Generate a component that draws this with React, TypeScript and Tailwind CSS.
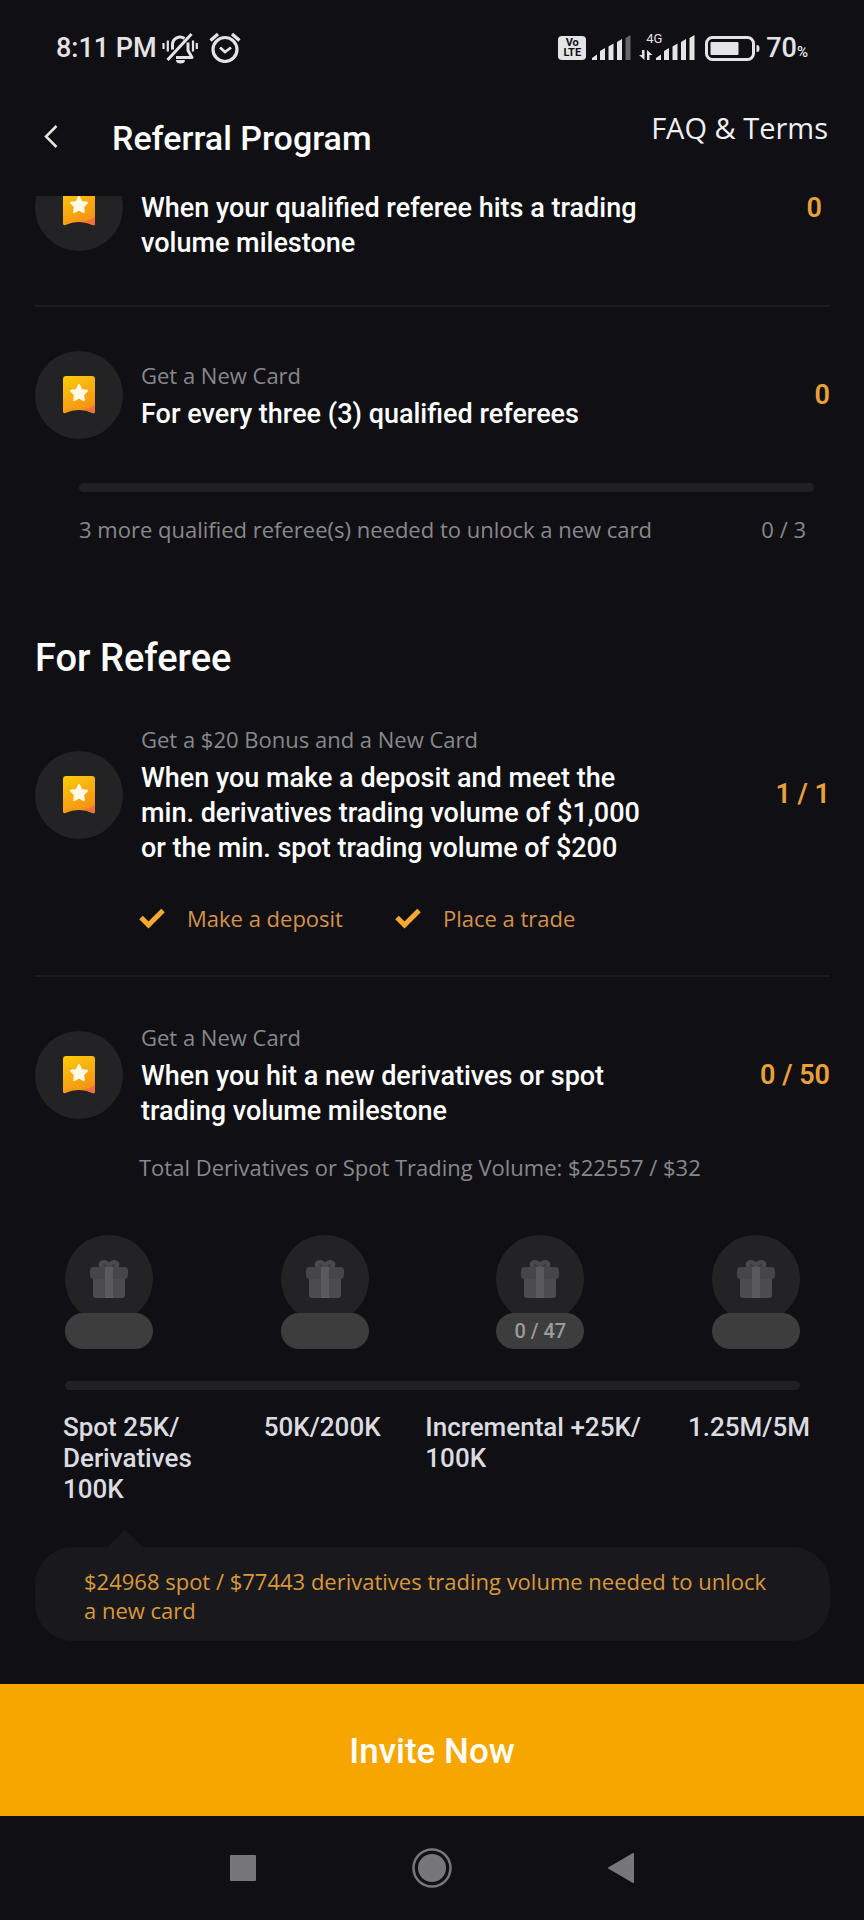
import { useId } from 'react';

const MILESTONES = [
	{ badge: '', label: 'Spot 25K/ Derivatives 100K', width: 'w-[156px]' },
	{ badge: '', label: '50K/200K', width: '' },
	{ badge: '0 / 47', label: 'Incremental +25K/ 100K', width: 'w-[218px]' },
	{ badge: '', label: '1.25M/5M', width: '' },
];

function MutedBellIcon() {
	return (
		<svg width="36" height="32" viewBox="0 0 36 32" fill="none" stroke="#e4e4e6" strokeWidth="3">
			<path d="M10.500 17.500V12.500a7.500 7.500 0 0 1 12-6" />
			<path d="M26 10.500v8l4 7H14" strokeLinejoin="round" />
			<path d="M5.500 28 29.500 2" />
			<path d="M14 28h9a4.500 3.500 0 0 1-9 0Z" fill="#e4e4e6" stroke="none" />
			<path d="M1.500 11v6M5.800 8.500v11M31 8.500v11M34.800 11v6" strokeWidth="2.200" />
		</svg>
	);
}

function AlarmIcon() {
	return (
		<svg width="32" height="32" viewBox="0 0 32 32" fill="none" stroke="#e4e4e6" strokeWidth="3.200">
			<circle cx="16" cy="17.500" r="12" />
			<path d="m11 15.500 5 4.500 6-4.500" strokeWidth="2.800" />
			<path d="M1.500 8.500 9 2M30.500 8.500 23 2" strokeWidth="3.400" />
		</svg>
	);
}

function SignalIcon({ dimLast = false }: { dimLast?: boolean }) {
	return (
		<svg width="39" height="26" viewBox="0 0 39 26" fill="#e4e4e6">
			<path d="M0 25v-2l5-3.500V25ZM8 25V16l5-3v12ZM16.500 25V11.500l5-3V25ZM25 25V7l5-3v21Z" />
			<path d="M33.500 25V3l5-3v25Z" fill={dimLast ? '#66666a' : '#e4e4e6'} />
		</svg>
	);
}

function BatteryIcon() {
	return (
		<svg width="55" height="25" viewBox="0 0 55 25">
			<rect x="1.500" y="1.500" width="47" height="22" rx="6" fill="none" stroke="#e4e4e6" strokeWidth="3" />
			<rect x="5.500" y="6" width="28" height="13" rx="1" fill="#e4e4e6" />
			<path d="M51.500 9c2.500 0 3 1 3 3.500s-.5 3.500-3 3.500Z" fill="#e4e4e6" />
		</svg>
	);
}

function StatusBar() {
	return (
		<div className="flex h-24 items-center justify-between px-14 font-[Roboto,sans-serif] text-[27px] font-medium leading-8 text-[#e4e4e6]">
			<div className="flex items-center">
				<span className="w-[106px]">8:11 PM</span>
				<MutedBellIcon />
				<span className="w-[11px]" />
				<AlarmIcon />
			</div>
			<div className="flex items-center">
				<div className="flex h-6 w-7 flex-col items-center justify-center rounded bg-[#e4e4e6] text-[11px] font-bold leading-[10px] text-[#101014]">
					<span>Vo</span>
					<span>LTE</span>
				</div>
				<span className="w-[6px]" />
				<SignalIcon dimLast />
				<div className="relative ml-[25px]">
					<SignalIcon />
					<span className="absolute -left-[10px] -top-[4px] text-[13px] font-normal leading-4">4G</span>
					<svg className="absolute -left-[17px] top-[15px]" width="14" height="10" viewBox="0 0 14 10" fill="#e4e4e6">
						<path d="M3 0h2.500v10L0 5h3ZM8 0l5.500 5h-3v5H8Z" />
					</svg>
				</div>
				<span className="w-[10px]" />
				<BatteryIcon />
				<span className="ml-[6px]">70</span>
				<span className="self-end text-[15px] leading-6">%</span>
			</div>
		</div>
	);
}

function CardIcon() {
	const id = useId();

	return (
		<div className="flex h-[88px] w-[88px] shrink-0 items-center justify-center rounded-full bg-[#232325]">
			<svg width="32" height="38" viewBox="0 0 32 38">
				<defs>
					<linearGradient id={id} x1="0.300" y1="0" x2="0.700" y2="1">
						<stop offset="0" stopColor="#fcc60c" />
						<stop offset="1" stopColor="#f58e14" />
					</linearGradient>
				</defs>
				<path d="M3 0h26a3 3 0 0 1 3 3v32.500c0 1.500-1 2-2.500 1.500-9-4-18-4-27 0C1 37.500 0 37 0 35.500V3a3 3 0 0 1 3-3Z" fill={`url(#${id})`} />
				<path d="M19 34c5-1 10-3 13-5v6.500c0 1.500-1 2-2.500 1.500-3.500-1.700-7-2.700-10.500-3Z" fill="#f4703a" />
				<path d="m16 9 2.400 5 5.600.8-4 3.900.9 5.500-4.900-2.600-4.900 2.600.9-5.500-4-3.900 5.600-.8Z" fill="#fffbe6" stroke="#fffbe6" strokeWidth="2" strokeLinejoin="round" />
			</svg>
		</div>
	);
}

function GiftIcon() {
	return (
		<svg width="38" height="38" viewBox="0 0 38 38">
			<path d="M18.500 9C9 9 9 2 14 2c3 0 4 2 5 5 1-3 2-5 5-5 5 0 5 7-4.500 7" fill="#3a3a3d" stroke="#4a4a4d" strokeWidth="4" />
			<path d="M3 16h32v19a3 3 0 0 1-3 3H6a3 3 0 0 1-3-3Z" fill="#4c4c4f" />
			<rect y="7" width="38" height="12" rx="4" fill="#464649" />
			<rect x="15" y="7" width="8" height="31" fill="#5a5a5d" />
		</svg>
	);
}

function CheckIcon() {
	return (
		<svg width="26" height="21" viewBox="0 0 26 21" fill="none" stroke="#f7a92f" strokeWidth="5">
			<path d="m2 9.500 7.500 7.500L24 2.500" />
		</svg>
	);
}

function RewardRow({ subtitle, title, value }: { subtitle: string; title: string; value: string }) {
	return (
		<div className="flex items-center">
			<CardIcon />
			<div className="ml-[18px] w-[510px]">
				<p className="mb-[6px] text-[22px] leading-[32px] text-[#88888c]">{subtitle}</p>
				<h3 className="font-[Roboto,sans-serif] text-[27px] font-medium leading-[35px] text-white">{title}</h3>
			</div>
			<span className="ml-auto whitespace-nowrap font-[Roboto,sans-serif] text-[27px] font-semibold leading-[35px] text-[#e9a03b]">
				{value}
			</span>
		</div>
	);
}

export default function App() {
	return (
		<div className="flex min-h-screen flex-col bg-[#101014] font-['Open_Sans',sans-serif]">
			<StatusBar />

			<header className="flex h-[95px] items-start pl-[44px] pr-9">
				<button type="button" aria-label="Back" className="mt-[29px]">
					<svg width="14" height="23" viewBox="0 0 14 23" fill="none" stroke="#e4e4e6" strokeWidth="2.500">
						<path d="M12.500 1 2 11.500 12.500 22" />
					</svg>
				</button>
				<h1 className="ml-[54px] mt-5 font-[Roboto,sans-serif] text-[34px] font-medium leading-[44px] text-white">
					Referral Program
				</h1>
				<a href="#faq" className="ml-auto mt-[14px] text-[29px] leading-[36px] text-[#f0f0f2]">
					FAQ &amp; Terms
				</a>
			</header>

			<main className="flex-1 pl-[35px] pr-[34px]">
				<div className="flex items-start">
					<div className="mt-[5px] flex h-[55px] items-end overflow-hidden">
						<CardIcon />
					</div>
					<h3 className="ml-[18px] w-[510px] font-[Roboto,sans-serif] text-[27px] font-medium leading-[35px] text-white">
						When your qualified referee hits a trading volume milestone
					</h3>
					<span className="ml-auto mr-2 font-[Roboto,sans-serif] text-[27px] font-semibold leading-[35px] text-[#e9a03b]">0</span>
				</div>

				<hr className="my-11 border-t-2 border-[#1d1d21]" />

				<RewardRow subtitle="Get a New Card" title="For every three (3) qualified referees" value="0" />
				<div className="ml-11 mr-4 mt-11">
					<div className="h-[9px] rounded-full bg-[#212125]" />
					<div className="mt-5 flex justify-between pr-2 text-[22px] leading-[34px] text-[#88888c]">
						<span>3 more qualified referee(s) needed to unlock a new card</span>
						<span>0 / 3</span>
					</div>
				</div>

				<h2 className="mb-[41px] mt-[88px] font-[Roboto,sans-serif] text-[38px] font-medium leading-[48px] text-white">For Referee</h2>

				<RewardRow
					subtitle="Get a $20 Bonus and a New Card"
					title="When you make a deposit and meet the min. derivatives trading volume of $1,000 or the min. spot trading volume of $200"
					value="1 / 1"
				/>
				<ul className="ml-[104px] mt-[35px] flex gap-[52px] text-[22px] leading-[34px] text-[#d5924a]">
					<li className="flex items-center gap-[22px]">
						<CheckIcon />
						Make a deposit
					</li>
					<li className="flex items-center gap-[22px]">
						<CheckIcon />
						Place a trade
					</li>
				</ul>

				<hr className="mb-11 mt-10 border-t-2 border-[#1d1d21]" />

				<RewardRow subtitle="Get a New Card" title="When you hit a new derivatives or spot trading volume milestone" value="0 / 50" />
				<p className="ml-[104px] mt-[21px] text-[22px] leading-[34px] text-[#88888c]">
					Total Derivatives or Spot Trading Volume: $22557 / $32
				</p>

				<div className="mx-[30px] mt-[51px]">
					<div className="flex h-[116px] items-start justify-between">
						{MILESTONES.map(({ badge, label }) => (
							<div key={label} className="w-[88px]">
								<div className="flex h-[88px] items-center justify-center rounded-full bg-[#232325]">
									<GiftIcon />
								</div>
								<div className="relative -mt-[10px] flex h-9 items-center justify-center rounded-full bg-[#3d3d3d] font-[Roboto,sans-serif] text-[20px] font-medium leading-6 text-[#9c9c9e]">
									{badge}
								</div>
							</div>
						))}
					</div>
					<div className="mt-[30px] h-[9px] rounded-full bg-[#212125]" />
				</div>
				<div className="ml-7 mr-5 mt-[22px] flex items-start justify-between font-[Roboto,sans-serif] text-[26px] font-medium leading-[31px] text-[#dcdce0]">
					{MILESTONES.map(({ label, width }) => (
						<p key={label} className={width}>
							{label}
						</p>
					))}
				</div>

				<div className="relative mb-[41px] mt-[42px] rounded-[38px] bg-[#19191d] px-[49px] pb-4 pt-5">
					<svg className="absolute -top-[17px] left-[71px]" width="38" height="18" viewBox="0 0 38 18" fill="#19191d">
						<path d="M0 18 19 0l19 18Z" />
					</svg>
					<p className="text-[22px] leading-[29px] text-[#d9983c]">
						$24968 spot / $77443 derivatives trading volume needed to unlock a new card
					</p>
				</div>
			</main>

			<button type="button" className="h-[132px] w-full bg-[#f7a600] pt-1 font-[Roboto,sans-serif] text-[35px] font-medium leading-[44px] text-white">
				Invite Now
			</button>

			<nav className="flex h-[104px] items-center justify-center gap-[156px]">
				<button type="button" aria-label="Recent apps">
					<svg width="26" height="26" viewBox="0 0 26 26">
						<rect width="26" height="26" rx="1" fill="#77767b" />
					</svg>
				</button>
				<button type="button" aria-label="Home">
					<svg width="40" height="40" viewBox="0 0 40 40">
						<circle cx="20" cy="20" r="18.500" fill="none" stroke="#77767b" strokeWidth="2.500" />
						<circle cx="20" cy="20" r="14" fill="#77767b" />
					</svg>
				</button>
				<button type="button" aria-label="Go back">
					<svg width="26" height="30" viewBox="0 0 26 30">
						<path d="M25 0c.7 0 1 .3 1 1v28c0 .7-.5 1.200-1 1L.5 15.800c-.7-.4-.7-1.200 0-1.600Z" fill="#77767b" />
					</svg>
				</button>
			</nav>
		</div>
	);
}
